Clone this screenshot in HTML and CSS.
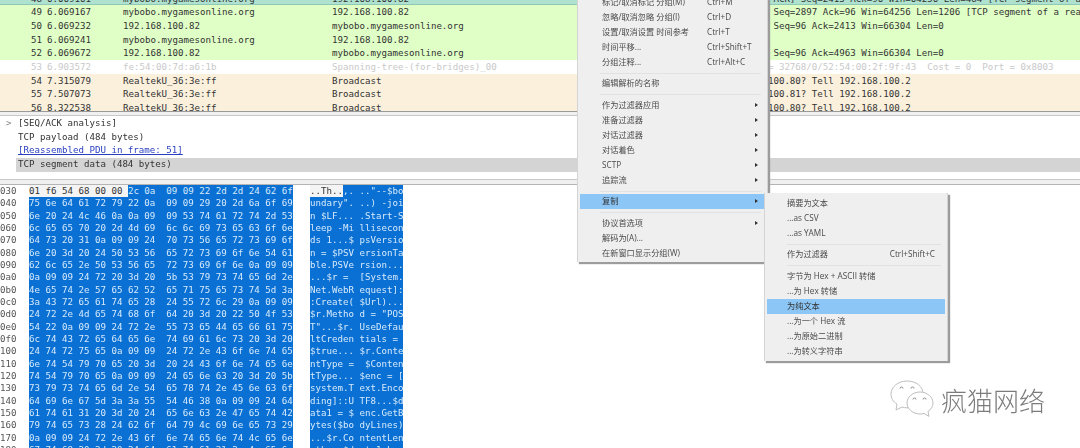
FILE: index.html
```html
<!DOCTYPE html>
<html lang="zh">
<head>
<meta charset="utf-8">
<title>Wireshark</title>
<link rel="stylesheet" href="styles.css">
</head>
<body>
<div class="app">
  <section class="packets">
    <div class="packet-scroll">
      <div class="pkt tcp-sel"><span class="no">48</span><span>6.069161</span><span>mybobo.mygamesonline.org</span><span>192.168.100.82</span><span>80 → 49912 [PSH, ACK] Seq=2413 Ack=96 Win=64256 Len=484 [TCP segment of a reassembled PDU]</span></div>
      <div class="pkt tcp"><span class="no">49</span><span>6.069167</span><span>mybobo.mygamesonline.org</span><span>192.168.100.82</span><span>80 → 49912 [ACK] Seq=2897 Ack=96 Win=64256 Len=1206 [TCP segment of a reassembled PDU]</span></div>
      <div class="pkt tcp"><span class="no">50</span><span>6.069232</span><span>192.168.100.82</span><span>mybobo.mygamesonline.org</span><span>49912 → 80 [ACK] Seq=96 Ack=2413 Win=66304 Len=0</span></div>
      <div class="pkt tcp"><span class="no">51</span><span>6.069241</span><span>mybobo.mygamesonline.org</span><span>192.168.100.82</span><span></span></div>
      <div class="pkt tcp"><span class="no">52</span><span>6.069672</span><span>192.168.100.82</span><span>mybobo.mygamesonline.org</span><span>49912 → 80 [ACK] Seq=96 Ack=4963 Win=66304 Len=0</span></div>
      <div class="pkt stp"><span class="no">53</span><span>6.903572</span><span>fe:54:00:7d:a6:1b</span><span>Spanning-tree-(for-bridges)_00</span><span>Conf. TC + Root = 32768/0/52:54:00:2f:9f:43  Cost = 0  Port = 0x8003</span></div>
      <div class="pkt arp"><span class="no">54</span><span>7.315079</span><span>RealtekU_36:3e:ff</span><span>Broadcast</span><span>Who has 192.168.100.80? Tell 192.168.100.2</span></div>
      <div class="pkt arp"><span class="no">55</span><span>7.507073</span><span>RealtekU_36:3e:ff</span><span>Broadcast</span><span>Who has 192.168.100.81? Tell 192.168.100.2</span></div>
      <div class="pkt arp"><span class="no">56</span><span>8.322538</span><span>RealtekU_36:3e:ff</span><span>Broadcast</span><span>Who has 192.168.100.80? Tell 192.168.100.2</span></div>
    </div>
  </section>
  <div class="splitter"></div>
  <section class="details">
    <div class="detail"><span class="twisty">&gt;</span>[SEQ/ACK analysis]</div>
    <div class="detail">TCP payload (484 bytes)</div>
    <div class="detail"><a class="link">[Reassembled PDU in frame: 51]</a></div>
    <div class="detail selected">TCP segment data (484 bytes)</div>
  </section>
  <div class="splitter lower"></div>
  <section class="hex">
    <div class="hexrow"><span class="off">0030</span><span class="bytes"><span class="plain">01 f6 54 68 00 00 </span><span class="sel">2c 0a  09 09 22 2d 2d 24 62 6f</span></span><span class="ascii"><span class="plain">..Th..</span><span class="sel">,. .."--$bo</span></span></div>
    <div class="hexrow"><span class="off">0040</span><span class="bytes sel">75 6e 64 61 72 79 22 0a  09 09 29 20 2d 6a 6f 69</span><span class="ascii sel">undary". ..) -joi</span></div>
    <div class="hexrow"><span class="off">0050</span><span class="bytes sel">6e 20 24 4c 46 0a 0a 09  09 53 74 61 72 74 2d 53</span><span class="ascii sel">n $LF... .Start-S</span></div>
    <div class="hexrow"><span class="off">0060</span><span class="bytes sel">6c 65 65 70 20 2d 4d 69  6c 6c 69 73 65 63 6f 6e</span><span class="ascii sel">leep -Mi llisecon</span></div>
    <div class="hexrow"><span class="off">0070</span><span class="bytes sel">64 73 20 31 0a 09 09 24  70 73 56 65 72 73 69 6f</span><span class="ascii sel">ds 1...$ psVersio</span></div>
    <div class="hexrow"><span class="off">0080</span><span class="bytes sel">6e 20 3d 20 24 50 53 56  65 72 73 69 6f 6e 54 61</span><span class="ascii sel">n = $PSV ersionTa</span></div>
    <div class="hexrow"><span class="off">0090</span><span class="bytes sel">62 6c 65 2e 50 53 56 65  72 73 69 6f 6e 0a 09 09</span><span class="ascii sel">ble.PSVe rsion...</span></div>
    <div class="hexrow"><span class="off">00a0</span><span class="bytes sel">0a 09 09 24 72 20 3d 20  5b 53 79 73 74 65 6d 2e</span><span class="ascii sel">...$r =  [System.</span></div>
    <div class="hexrow"><span class="off">00b0</span><span class="bytes sel">4e 65 74 2e 57 65 62 52  65 71 75 65 73 74 5d 3a</span><span class="ascii sel">Net.WebR equest]:</span></div>
    <div class="hexrow"><span class="off">00c0</span><span class="bytes sel">3a 43 72 65 61 74 65 28  24 55 72 6c 29 0a 09 09</span><span class="ascii sel">:Create( $Url)...</span></div>
    <div class="hexrow"><span class="off">00d0</span><span class="bytes sel">24 72 2e 4d 65 74 68 6f  64 20 3d 20 22 50 4f 53</span><span class="ascii sel">$r.Metho d = "POS</span></div>
    <div class="hexrow"><span class="off">00e0</span><span class="bytes sel">54 22 0a 09 09 24 72 2e  55 73 65 44 65 66 61 75</span><span class="ascii sel">T"...$r. UseDefau</span></div>
    <div class="hexrow"><span class="off">00f0</span><span class="bytes sel">6c 74 43 72 65 64 65 6e  74 69 61 6c 73 20 3d 20</span><span class="ascii sel">ltCreden tials = </span></div>
    <div class="hexrow"><span class="off">0100</span><span class="bytes sel">24 74 72 75 65 0a 09 09  24 72 2e 43 6f 6e 74 65</span><span class="ascii sel">$true... $r.Conte</span></div>
    <div class="hexrow"><span class="off">0110</span><span class="bytes sel">6e 74 54 79 70 65 20 3d  20 24 43 6f 6e 74 65 6e</span><span class="ascii sel">ntType =  $Conten</span></div>
    <div class="hexrow"><span class="off">0120</span><span class="bytes sel">74 54 79 70 65 0a 09 09  24 65 6e 63 20 3d 20 5b</span><span class="ascii sel">tType... $enc = [</span></div>
    <div class="hexrow"><span class="off">0130</span><span class="bytes sel">73 79 73 74 65 6d 2e 54  65 78 74 2e 45 6e 63 6f</span><span class="ascii sel">system.T ext.Enco</span></div>
    <div class="hexrow"><span class="off">0140</span><span class="bytes sel">64 69 6e 67 5d 3a 3a 55  54 46 38 0a 09 09 24 64</span><span class="ascii sel">ding]::U TF8...$d</span></div>
    <div class="hexrow"><span class="off">0150</span><span class="bytes sel">61 74 61 31 20 3d 20 24  65 6e 63 2e 47 65 74 42</span><span class="ascii sel">ata1 = $ enc.GetB</span></div>
    <div class="hexrow"><span class="off">0160</span><span class="bytes sel">79 74 65 73 28 24 62 6f  64 79 4c 69 6e 65 73 29</span><span class="ascii sel">ytes($bo dyLines)</span></div>
    <div class="hexrow"><span class="off">0170</span><span class="bytes sel">0a 09 09 24 72 2e 43 6f  6e 74 65 6e 74 4c 65 6e</span><span class="ascii sel">...$r.Co ntentLen</span></div>
    <div class="hexrow"><span class="off">0180</span><span class="bytes sel">67 74 68 20 3d 20 24 64  61 74 61 31 2e 4c 65 6e</span><span class="ascii sel">gth = $d ata1.Len</span></div>
  </section>

  <nav class="menu main-menu">
    <div class="item"><span>标记/取消标记 分组(M)</span><span class="key">Ctrl+M</span></div>
    <div class="item"><span>忽略/取消忽略 分组(I)</span><span class="key">Ctrl+D</span></div>
    <div class="item"><span>设置/取消设置 时间参考</span><span class="key">Ctrl+T</span></div>
    <div class="item"><span>时间平移...</span><span class="key">Ctrl+Shift+T</span></div>
    <div class="item"><span>分组注释...</span><span class="key">Ctrl+Alt+C</span></div>
    <div class="sep"></div>
    <div class="item"><span>编辑解析的名称</span></div>
    <div class="sep"></div>
    <div class="item sub"><span>作为过滤器应用</span></div>
    <div class="item sub"><span>准备过滤器</span></div>
    <div class="item sub"><span>对话过滤器</span></div>
    <div class="item sub"><span>对话着色</span></div>
    <div class="item sub"><span>SCTP</span></div>
    <div class="item sub"><span>追踪流</span></div>
    <div class="sep"></div>
    <div class="item sub active"><span>复制</span></div>
    <div class="sep"></div>
    <div class="item sub"><span>协议首选项</span></div>
    <div class="item"><span>解码为(A)...</span></div>
    <div class="item"><span>在新窗口显示分组(W)</span></div>
  </nav>

  <nav class="menu copy-menu">
    <div class="item"><span>摘要为文本</span></div>
    <div class="item"><span>...as CSV</span></div>
    <div class="item"><span>...as YAML</span></div>
    <div class="sep"></div>
    <div class="item"><span>作为过滤器</span><span class="key end">Ctrl+Shift+C</span></div>
    <div class="sep"></div>
    <div class="item"><span>字节为 Hex + ASCII 转储</span></div>
    <div class="item"><span>...为 Hex 转储</span></div>
    <div class="item active"><span>为纯文本</span></div>
    <div class="item"><span>...为一个 Hex 流</span></div>
    <div class="item"><span>...为原始二进制</span></div>
    <div class="item"><span>...为转义字符串</span></div>
  </nav>
</div>

<div class="watermark">
  <svg class="wm-icon" width="44" height="40" viewBox="0 0 44 40" fill="#fff" stroke="#bdbdbd" stroke-width="1">
    <path d="M17 1C8 1 1 7 1 14c0 4 2 8 6 10l-1 6 6-3c2 .6 3 .8 5 .8 9 0 16-6 16-13.800S26 1 17 1z"/>
    <path d="M30 12c-7 0-13 5-13 11s6 11 13 11c1.500 0 3-.2 4-.6l5 3-1-5c3-2 5-5 5-8.400 0-6-6-11-13-11z"/>
    <g fill="none" stroke="#8a8a8a">
      <path d="M10 8.500a1.500 1.500 0 0 1 3 0M21 8.500a1.500 1.500 0 0 1 3 0M23 19.500a1.500 1.500 0 0 1 3 0M33 19.500a1.500 1.500 0 0 1 3 0"/>
    </g>
  </svg>
  <span class="wm-text">疯猫网络</span>
</div>
</body>
</html>
```
FILE: styles.css
```css
html, body {
  margin: 0;
  padding: 0;
  background: #fff;
}
body {
  width: 1080px;
  height: 448px;
  overflow: hidden;
  position: relative;
}
.app {
  position: relative;
  width: 1080px;
  height: 448px;
  overflow: hidden;
  filter: blur(0.55px);
  font-family: "DejaVu Sans Mono", "Liberation Mono", monospace;
  font-size: 9.13px;
  color: #333;
}
.packets {
  height: 111px;
  overflow: hidden;
}
.packet-scroll {
  margin-top: -8.33px;
}
.pkt {
  display: grid;
  grid-template-columns: 42px 76px 209px 353px 1fr;
  height: 13.67px;
  line-height: 14.2px;
  white-space: pre;
  overflow: hidden;
}
.pkt > span:nth-child(2),
.pkt > span:nth-child(3),
.pkt > span:nth-child(4) { padding-left: 5px; }
.pkt .no { text-align: right; }
.tcp-sel { background: #aee2cf; border-bottom: 1px solid #8fc8b6; box-sizing: border-box; }
.tcp { background: #e0ffc6; }
.stp { background: #fff; color: #c9c9c9; }
.arp { background: #faf0dc; }
.splitter {
  height: 5px;
  box-sizing: border-box;
  background: #f0f0f0;
  border-top: 1px solid #9a9a9a;
  border-bottom: 1px solid #c8c8c8;
}
.splitter.lower {
  height: 6px;
  border-top-color: #c8c8c8;
  border-bottom-color: #b4b4b4;
}
.details {
  height: 63px;
  padding-top: 1px;
  box-sizing: border-box;
}
.detail {
  position: relative;
  height: 13.67px;
  line-height: 13.67px;
  padding-left: 18px;
  white-space: pre;
}
.detail.selected {
  background: #d4d4d4;
  margin-left: 16px;
  padding-left: 2px;
}
.twisty {
  position: absolute;
  left: 6px;
  color: #888;
}
.link {
  color: #2a3fc0;
  text-decoration: underline;
}
.hexrow {
  display: grid;
  grid-template-columns: 29px 281px 1fr;
  height: 12.33px;
  line-height: 13.2px;
  white-space: pre;
  overflow: hidden;
}
.off {
  margin-left: -5.5px;
  color: #555;
}
.bytes,
.ascii {
  display: flex;
  overflow: hidden;
}
.bytes { width: 263.5px; }
.ascii { width: 92.5px; }
.bytes > span,
.ascii > span { flex: none; }
.sel {
  background: #0a70d3;
  color: #d6eafc;
}
.plain {
  background: #f4f4f4;
  color: #333;
}
.menu {
  position: absolute;
  background: #efefef;
  box-sizing: border-box;
  padding: 2.5px 2px;
  border: 1px solid #d4d4d4;
  border-width: 0 1px;
  box-shadow: 2px 2px 1px #9c9c9c;
  font-family: "Open Sans", "Noto Sans CJK SC", sans-serif;
  font-size: 8.2px;
  color: #4a4a4a;
}
.main-menu {
  left: 577px;
  top: -8px;
  width: 191px;
  height: 269.5px;
}
.copy-menu {
  left: 764px;
  top: 193px;
  width: 184px;
  height: 168px;
}
.item {
  position: relative;
  height: 15px;
  line-height: 13.6px;
  padding-left: 22px;
  white-space: pre;
}
.copy-menu .item { padding-left: 20px; }
.key {
  position: absolute;
  left: 127px;
  top: 0;
}
.key.end {
  left: auto;
  right: 10px;
}
.item.sub::after {
  content: "";
  position: absolute;
  right: 7px;
  top: 5px;
  border-left: 3px solid #333;
  border-top: 2px solid transparent;
  border-bottom: 2px solid transparent;
}
.active {
  background: #8cc6f6;
  color: #333;
}
.sep {
  height: 6.5px;
  box-sizing: border-box;
  padding-top: 3px;
  margin: 0 4px 0 20px;
}
.sep::before {
  content: "";
  display: block;
  height: 1px;
  background: #e2e2e2;
}
.watermark {
  position: absolute;
  left: 890px;
  top: 380px;
  display: flex;
  align-items: center;
  gap: 7px;
}
.wm-icon { display: block; }
.wm-text {
  font-family: "Noto Sans CJK SC", sans-serif;
  font-size: 26px;
  font-weight: 300;
  line-height: 38px;
  color: #7c7c7c;
}
```
